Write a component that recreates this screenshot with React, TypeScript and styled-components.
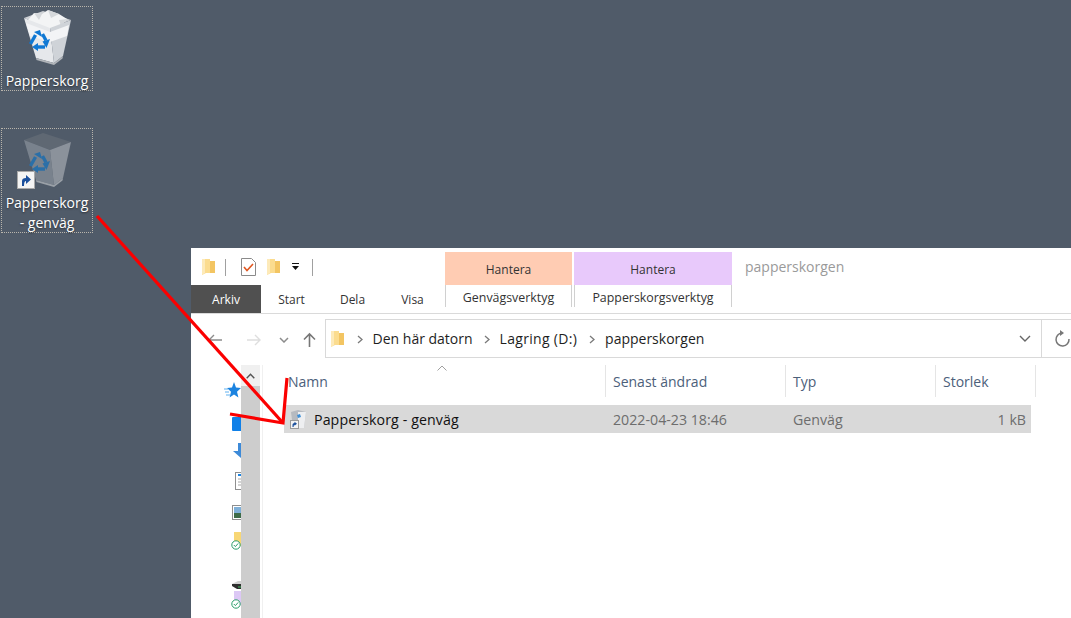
import { FC } from "react"
import styled, { createGlobalStyle } from "styled-components"

const GlobalStyle = createGlobalStyle`
    html, body {
        margin: 0;
        padding: 0;
        height: 100%;
        overflow: hidden;
        background: #505b69;
        font-family: "Open Sans", "Noto Sans", "Liberation Sans", sans-serif;
    }
`

const Desktop = styled.div`
    position: relative;
    width: 1071px;
    height: 618px;
    overflow: hidden;
    background: #505b69;
`

const DesktopIcon = styled.div<{ $top: number; $height: number }>`
    position: absolute;
    left: 1px;
    top: ${p => p.$top}px;
    width: 90px;
    height: ${p => p.$height}px;
    border: 1px dotted #b9b5ac;
    display: flex;
    flex-direction: column;
    align-items: center;
`

const IconSlot = styled.div`
    position: relative;
    width: 60px;
    height: 58px;
    margin-top: 3px;
    flex: none;
`

const DesktopLabel = styled.div`
    color: #fff;
    font-size: 14px;
    line-height: 20px;
    text-align: center;
    margin-top: 3px;
    text-shadow: 0 1px 2px rgba(0, 0, 0, 0.5);
`

const ShortcutBadge = styled.div`
    position: absolute;
    left: 0;
    bottom: 1px;
    width: 16px;
    height: 16px;
    background: #f4f4f4;
    border: 1px solid #a9a9a9;
    display: flex;
    align-items: center;
    justify-content: center;
`

const Explorer = styled.div`
    position: absolute;
    left: 191px;
    top: 248px;
    width: 880px;
    height: 370px;
    background: #fff;
    display: flex;
    flex-direction: column;
    color: #1e1e1e;
`

const TitleBar = styled.div`
    height: 37px;
    display: flex;
    flex: none;
`

const QuickAccess = styled.div`
    width: 254px;
    display: flex;
    align-items: center;
    padding: 1px 0 0 11px;
    box-sizing: border-box;
`

const QatSeparator = styled.div<{ $left: number; $right: number }>`
    width: 1px;
    height: 17px;
    background: #a0a0a0;
    margin: 0 ${p => p.$right}px 0 ${p => p.$left}px;
`

const QatDoc = styled.svg`
    flex: none;
    margin-right: 11px;
`

const QatCaret = styled.svg`
    flex: none;
    margin-left: 11px;
`

const ContextHeader = styled.div<{ $bg: string; $width: number }>`
    width: ${p => p.$width}px;
    height: 33px;
    margin-top: 4px;
    margin-right: 2px;
    background: ${p => p.$bg};
    display: flex;
    align-items: center;
    justify-content: center;
    font-size: 12px;
    padding-top: 1px;
    box-sizing: border-box;
    color: #333;
`

const WindowTitle = styled.div`
    font-size: 14px;
    color: #9a9a9a;
    margin: 11px 0 0 11px;
    line-height: 16px;
`

const RibbonTabs = styled.div`
    height: 29px;
    display: flex;
    flex: none;
    border-bottom: 1px solid #dadada;
    box-sizing: border-box;
`

const FileTab = styled.div`
    width: 70px;
    height: 28px;
    background: #505050;
    color: #fff;
    font-size: 12px;
    display: flex;
    align-items: center;
    justify-content: center;
`

const RibbonTab = styled.div<{ $width: number; $inset?: number }>`
    width: ${p => p.$width}px;
    padding-right: ${p => p.$inset ?? 0}px;
    box-sizing: border-box;
    font-size: 12px;
    display: flex;
    align-items: center;
    justify-content: center;
    color: #333;
`

const ToolTab = styled.div<{ $width: number }>`
    width: ${p => p.$width}px;
    height: 22px;
    margin-right: 2px;
    padding-top: 4px;
    border-left: 1px solid #d0d0d0;
    border-right: 1px solid #d0d0d0;
    box-sizing: border-box;
    font-size: 12.4px;
    text-align: center;
    color: #333;
    white-space: nowrap;
`

const NavBar = styled.div`
    height: 39px;
    margin-top: 5px;
    display: flex;
    flex: none;
`

const NavButtons = styled.div`
    width: 134px;
    display: flex;
    align-items: center;
    padding: 2px 0 0 16px;
    box-sizing: border-box;
`

const NavIcon = styled.svg<{ $gap?: number }>`
    flex: none;
    margin-right: ${p => p.$gap ?? 0}px;
`

const AddressBox = styled.div`
    width: 720px;
    height: 39px;
    border: 1px solid #d9d9d9;
    box-sizing: border-box;
    display: flex;
    align-items: center;
    padding: 0 10px 0 5px;
    font-size: 14px;
    color: #1e1e1e;
`

const Crumb = styled.span<{ $spacing?: number }>`
    line-height: 20px;
    letter-spacing: ${p => p.$spacing ?? 0}px;
`

const CrumbArrow = styled.svg<{ $left: number; $right: number }>`
    flex: none;
    margin: 1px ${p => p.$right}px 0 ${p => p.$left}px;
`

const Spacer = styled.div`
    flex: 1;
`

const RefreshBox = styled.div`
    flex: 1;
    height: 39px;
    border-top: 1px solid #d9d9d9;
    border-bottom: 1px solid #d9d9d9;
    box-sizing: border-box;
    padding: 10px 0 0 13px;
`

const Body = styled.div`
    flex: 1;
    display: flex;
    min-height: 0;
    margin-top: 7px;
`

const Sidebar = styled.div`
    width: 50px;
    flex: none;
    overflow: hidden;
    padding-top: 16px;
    box-sizing: border-box;
    display: flex;
    flex-direction: column;
`

const SideItem = styled.div<{ $height: number; $left: number }>`
    height: ${p => p.$height}px;
    padding-left: ${p => p.$left}px;
    flex: none;
`

const SideBadged = styled.div`
    position: relative;
    width: 16px;
    height: 18px;
`

const SideFolder = styled.svg`
    display: block;
    margin-left: 3px;
`

const CheckMark = styled.svg`
    position: absolute;
    left: 0;
    top: 8px;
`

const ScrollTrack = styled.div`
    width: 19px;
    flex: none;
    background: #cdcdcd;
`

const ScrollUp = styled.div`
    height: 21px;
    background: #f0f0f0;
    display: flex;
    align-items: center;
    justify-content: center;
`

const Divider = styled.div`
    width: 1px;
    margin-left: 2px;
    background: #f0f0f0;
    flex: none;
`

const FileArea = styled.div`
    flex: 1;
    padding-left: 21px;
    min-width: 0;
    position: relative;
`

const HeaderRow = styled.div`
    height: 32px;
    display: flex;
`

const HeaderCell = styled.div<{ $width: number; $pad?: number }>`
    width: ${p => p.$width}px;
    flex: none;
    box-sizing: border-box;
    border-right: 1px solid #e5e5e5;
    padding-left: ${p => p.$pad ?? 7}px;
    font-size: 14px;
    line-height: 34px;
    color: #4c607a;
`

const SortCaret = styled.svg`
    position: absolute;
    left: 174px;
    top: 0;
`

const FileRow = styled.div`
    width: 747px;
    height: 28px;
    margin-top: 8px;
    background: #d9d9d9;
    display: flex;
    align-items: center;
    font-size: 14.2px;
    color: #6d6d6d;
`

const RowCell = styled.div<{ $width: number; $right?: boolean }>`
    width: ${p => p.$width}px;
    flex: none;
    box-sizing: border-box;
    padding: ${p => (p.$right ? "0 5px 0 0" : "0 0 0 7px")};
    text-align: ${p => (p.$right ? "right" : "left")};
    white-space: nowrap;
`

const NameCell = styled.div`
    width: 322px;
    flex: none;
    display: flex;
    align-items: center;
    padding-left: 5px;
    box-sizing: border-box;
    gap: 7px;
    color: #111;
    letter-spacing: 0.1px;
`

const SmallIcon = styled.svg`
    flex: none;
`

const ArrowOverlay = styled.svg`
    position: absolute;
    left: 0;
    top: 0;
    pointer-events: none;
`

const FolderSvg = styled.svg`
    flex: none;
`

const Folder: FC = () => (
    <FolderSvg width="13" height="18" viewBox="0 0 13 18">
        <path d="M0 1 L8 1 L8 3 L13 3 L13 15 L4 15 L0 17 Z" fill="#fbdc8f" />
        <path d="M8 1 L8 3 L13 3 L13 15 L8 15 Z" fill="#f3c562" />
        <path d="M0 1 L3 1 L3 15 L0 17 Z" fill="#fdeab9" />
    </FolderSvg>
)

const TrashCan: FC<{ full?: boolean }> = ({ full }) => {
    const blue = full ? "#0f78d4" : "#2a6fa8"
    return (
        <svg width="60" height="58" viewBox="0 0 60 58">
            {/* inner rim */}
            <path d="M7 8 L26 1 L54 10 L33 18 Z" fill={full ? "#cfd2d6" : "#5f6873"} />
            {full && (
                <>
                    <path d="M11 10 L17 3 L25 4 L31 0 L42 4 L50 9 L44 16 L30 19 L16 15 Z" fill="#f3f4f5" />
                    <path d="M17 3 L25 4 L22 10 Z M31 0 L42 4 L34 8 Z M42 10 L50 9 L44 16 Z" fill="#d5d8db" />
                </>
            )}
            {/* left and right faces */}
            <path d="M7 8 L33 18 L37 53 L19 48 Z" fill={full ? "#e6e8eb" : "#79828d"} />
            <path d="M33 18 L54 10 L46 46 L37 53 Z" fill={full ? "#cfd3d8" : "#8b929b"} />
            {full && <path d="M9 13 L33 22 L52 15 L50 26 L33 32 L13 26 Z" fill="#f3f4f6" />}
            <path d="M19 48 L37 53 L46 46 L45.5 48.5 L37 55 L19.5 50 Z" fill={full ? "#b0b4b9" : "#9aa0a7"} />
            {/* recycle arrows */}
            <g fill="none" stroke={blue} strokeWidth="3.4">
                <path d="M13.5 34 L18.5 25" />
                <path d="M25.5 24 L29 30.5" />
                <path d="M28 37 H21" />
            </g>
            <g fill={blue}>
                <path d="M17 22 L23 20 L25 27 Z" />
                <path d="M33 29 L25.5 31.5 L29.5 38 Z" />
                <path d="M21 33 L15 37 L21 41 Z" />
            </g>
        </svg>
    )
}

const ShortcutArrow: FC = () => (
    <svg width="12" height="12" viewBox="0 0 12 12">
        <path d="M2 12 L2 7 Q2 4 6 4 L6 1 L11 5.5 L6 10 L6 7 Q4 7 4 12 Z" fill="#1a4f9c" />
    </svg>
)

const CheckBadge: FC = () => (
    <CheckMark width="10" height="10" viewBox="0 0 10 10">
        <circle cx="5" cy="5" r="4.2" fill="#fff" stroke="#2a9d6a" strokeWidth="1" />
        <path d="M2.8 5 L4.4 6.6 L7.2 3.4" fill="none" stroke="#2a9d6a" strokeWidth="1" />
    </CheckMark>
)

const CrumbChevron: FC<{ left: number; right: number }> = ({ left, right }) => (
    <CrumbArrow width="6" height="9" viewBox="0 0 6 9" $left={left} $right={right}>
        <path d="M1 1 L5 4.5 L1 8" fill="none" stroke="#7a7a7a" strokeWidth="1.3" />
    </CrumbArrow>
)

const App: FC = () => {
    return (
        <>
            <GlobalStyle />
            <Desktop>
                <DesktopIcon $top={6} $height={83}>
                    <IconSlot>
                        <TrashCan full />
                    </IconSlot>
                    <DesktopLabel>Papperskorg</DesktopLabel>
                </DesktopIcon>
                <DesktopIcon $top={128} $height={103}>
                    <IconSlot>
                        <TrashCan />
                        <ShortcutBadge>
                            <ShortcutArrow />
                        </ShortcutBadge>
                    </IconSlot>
                    <DesktopLabel>Papperskorg<br />- genväg</DesktopLabel>
                </DesktopIcon>

                <Explorer>
                    <TitleBar>
                        <QuickAccess>
                            <Folder />
                            <QatSeparator $left={10} $right={15} />
                            <QatDoc width="15" height="18" viewBox="0 0 15 18">
                                <path d="M0.5 0.5 H10.5 L14.5 4.5 V17.5 H0.5 Z" fill="#fff" stroke="#8a8a8a" />
                                <path d="M3 9 L6 12.5 L12 6" fill="none" stroke="#e0561f" strokeWidth="1.6" />
                            </QatDoc>
                            <Folder />
                            <QatCaret width="9" height="8" viewBox="0 0 9 8">
                                <path d="M1 0.5 H8" stroke="#111" />
                                <path d="M1 3 H8 L4.5 7 Z" fill="#111" />
                            </QatCaret>
                            <QatSeparator $left={12} $right={0} />
                        </QuickAccess>
                        <ContextHeader $bg="#ffccb3" $width={127}>Hantera</ContextHeader>
                        <ContextHeader $bg="#e8c9fb" $width={158}>Hantera</ContextHeader>
                        <WindowTitle>papperskorgen</WindowTitle>
                    </TitleBar>

                    <RibbonTabs>
                        <FileTab>Arkiv</FileTab>
                        <RibbonTab $width={61}>Start</RibbonTab>
                        <RibbonTab $width={61}>Dela</RibbonTab>
                        <RibbonTab $width={62} $inset={3}>Visa</RibbonTab>
                        <ToolTab $width={127}>Genvägsverktyg</ToolTab>
                        <ToolTab $width={158}>Papperskorgsverktyg</ToolTab>
                    </RibbonTabs>

                    <NavBar>
                        <NavButtons>
                            <NavIcon width="16" height="12" viewBox="0 0 16 12" $gap={23}>
                                <path d="M15 6 H2 M7 1 L2 6 L7 11" fill="none" stroke="#8c8c8c" strokeWidth="1.4" />
                            </NavIcon>
                            <NavIcon width="16" height="12" viewBox="0 0 16 12" $gap={17}>
                                <path d="M1 6 H14 M9 1 L14 6 L9 11" fill="none" stroke="#dedede" strokeWidth="1.4" />
                            </NavIcon>
                            <NavIcon width="10" height="6" viewBox="0 0 10 6" $gap={14}>
                                <path d="M1 1 L5 5 L9 1" fill="none" stroke="#8c8c8c" strokeWidth="1.5" />
                            </NavIcon>
                            <NavIcon width="13" height="15" viewBox="0 0 13 15">
                                <path d="M6.5 15 V2 M1 7.5 L6.5 2 L12 7.5" fill="none" stroke="#777" strokeWidth="1.6" />
                            </NavIcon>
                        </NavButtons>
                        <AddressBox>
                            <Folder />
                            <CrumbChevron left={13} right={10} />
                            <Crumb>Den här datorn</Crumb>
                            <CrumbChevron left={11} right={10} />
                            <Crumb $spacing={0.3}>Lagring (D:)</Crumb>
                            <CrumbChevron left={12} right={10} />
                            <Crumb>papperskorgen</Crumb>
                            <Spacer />
                            <svg width="12" height="7" viewBox="0 0 12 7">
                                <path d="M1 1 L6 6 L11 1" fill="none" stroke="#666" strokeWidth="1.4" />
                            </svg>
                        </AddressBox>
                        <RefreshBox>
                            <svg width="16" height="18" viewBox="0 0 16 18">
                                <path d="M7 3 A6.5 6.5 0 1 0 14 9" fill="none" stroke="#777" strokeWidth="1.5" />
                                <path d="M5 0 V6 L9 3 Z" fill="#777" />
                            </svg>
                        </RefreshBox>
                    </NavBar>

                    <Body>
                        <Sidebar>
                            <SideItem $height={33} $left={33}>
                                <svg width="17" height="18" viewBox="0 0 17 18">
                                    <path d="M10 1 L12 6.4 L17 7 L13 10.7 L14.4 16.5 L10 13.4 L5.6 16.5 L7 10.7 L3 7 L8 6.4 Z" fill="#1b83e0" />
                                    <path d="M0 8 H4 M1 11 H5 M2 14 H6" stroke="#5eb0f0" strokeWidth="1" />
                                </svg>
                            </SideItem>
                            <SideItem $height={28} $left={41}>
                                <svg width="16" height="14" viewBox="0 0 16 14">
                                    <rect x="0" y="0" width="16" height="14" rx="1" fill="#0f80e8" />
                                </svg>
                            </SideItem>
                            <SideItem $height={30} $left={42}>
                                <svg width="18" height="16" viewBox="0 0 18 16">
                                    <path d="M5 0 H13 V8 H18 L9 16 L0 8 H5 Z" fill="#3d8ad8" />
                                </svg>
                            </SideItem>
                            <SideItem $height={31} $left={44}>
                                <svg width="16" height="18" viewBox="0 0 16 18">
                                    <rect x="0.5" y="0.5" width="15" height="17" fill="#fff" stroke="#8f8f8f" />
                                    <path d="M3 3 H10" stroke="#1b83e0" strokeWidth="2" />
                                    <path d="M3 7 H13 M3 10 H13 M3 13 H13" stroke="#a8a8a8" />
                                </svg>
                            </SideItem>
                            <SideItem $height={29} $left={41}>
                                <svg width="16" height="15" viewBox="0 0 16 15">
                                    <rect x="0.5" y="0.5" width="15" height="14" fill="#fff" stroke="#8f8f8f" />
                                    <rect x="2" y="2" width="12" height="6" fill="#7fb0d8" />
                                    <rect x="2" y="8" width="12" height="5" fill="#3e6b48" />
                                </svg>
                            </SideItem>
                            <SideItem $height={40} $left={40}>
                                <SideBadged>
                                    <SideFolder width="14" height="14" viewBox="0 0 14 14">
                                        <path d="M0 0 H14 V14 H0 Z" fill="#f8d775" />
                                    </SideFolder>
                                    <CheckBadge />
                                </SideBadged>
                            </SideItem>
                            <SideItem $height={19} $left={41}>
                                <svg width="14" height="8" viewBox="0 0 14 8">
                                    <path d="M0 3 L6 0 H14 V3 Z" fill="#d0d0d0" />
                                    <path d="M0 3 H14 V8 L5 8 L0 5 Z" fill="#2f2f2f" />
                                    <path d="M6 6 H14" stroke="#3aa655" strokeWidth="1.2" />
                                </svg>
                            </SideItem>
                            <SideItem $height={30} $left={40}>
                                <SideBadged>
                                    <SideFolder width="14" height="14" viewBox="0 0 14 14">
                                        <path d="M0 0 H14 V14 H0 Z" fill="#dcc8f5" />
                                    </SideFolder>
                                    <CheckBadge />
                                </SideBadged>
                            </SideItem>
                        </Sidebar>
                        <ScrollTrack>
                            <ScrollUp>
                                <svg width="9" height="6" viewBox="0 0 9 6">
                                    <path d="M0.7 5.3 L4.5 1.2 L8.3 5.3" fill="none" stroke="#555" strokeWidth="1.4" />
                                </svg>
                            </ScrollUp>
                        </ScrollTrack>
                        <Divider />
                        <FileArea>
                            <SortCaret width="10" height="6" viewBox="0 0 10 6">
                                <path d="M0.5 5.5 L5 1 L9.5 5.5" fill="none" stroke="#a0a0a0" />
                            </SortCaret>
                            <HeaderRow>
                                <HeaderCell $width={322} $pad={4}>Namn</HeaderCell>
                                <HeaderCell $width={180}>Senast ändrad</HeaderCell>
                                <HeaderCell $width={150}>Typ</HeaderCell>
                                <HeaderCell $width={100}>Storlek</HeaderCell>
                            </HeaderRow>
                            <FileRow>
                                <NameCell>
                                    <SmallIcon width="18" height="20" viewBox="0 0 18 20">
                                        <path d="M2 3 L9 1 L17 3 L15 19 H4 Z" fill="#b6bac0" />
                                        <path d="M9 3 L17 3 L15 19 H9 Z" fill="#eeeff1" />
                                        <path d="M8 6 L11 5 L12 8 L9 9 Z" fill="#3f8fd6" />
                                        <rect x="1.5" y="11.5" width="8" height="8" fill="#f4f4f4" stroke="#9a9a9a" />
                                        <path d="M3.5 18 V15.5 Q3.5 14 5.5 14 V12.8 L8 14.8 L5.5 16.8 V15.7 Q4.6 15.7 4.6 18 Z" fill="#1a4f9c" />
                                    </SmallIcon>
                                    Papperskorg - genväg
                                </NameCell>
                                <RowCell $width={180}>2022-04-23 18:46</RowCell>
                                <RowCell $width={150}>Genväg</RowCell>
                                <RowCell $width={95} $right>1 kB</RowCell>
                            </FileRow>
                        </FileArea>
                    </Body>
                </Explorer>

                <ArrowOverlay width="1071" height="618" viewBox="0 0 1071 618">
                    <g fill="none" stroke="#fb0000" strokeWidth="3.2">
                        <path d="M97 216 L283 423" />
                        <path d="M230 414 L283 423 L287 378" />
                    </g>
                </ArrowOverlay>
            </Desktop>
        </>
    )
}

export default App
